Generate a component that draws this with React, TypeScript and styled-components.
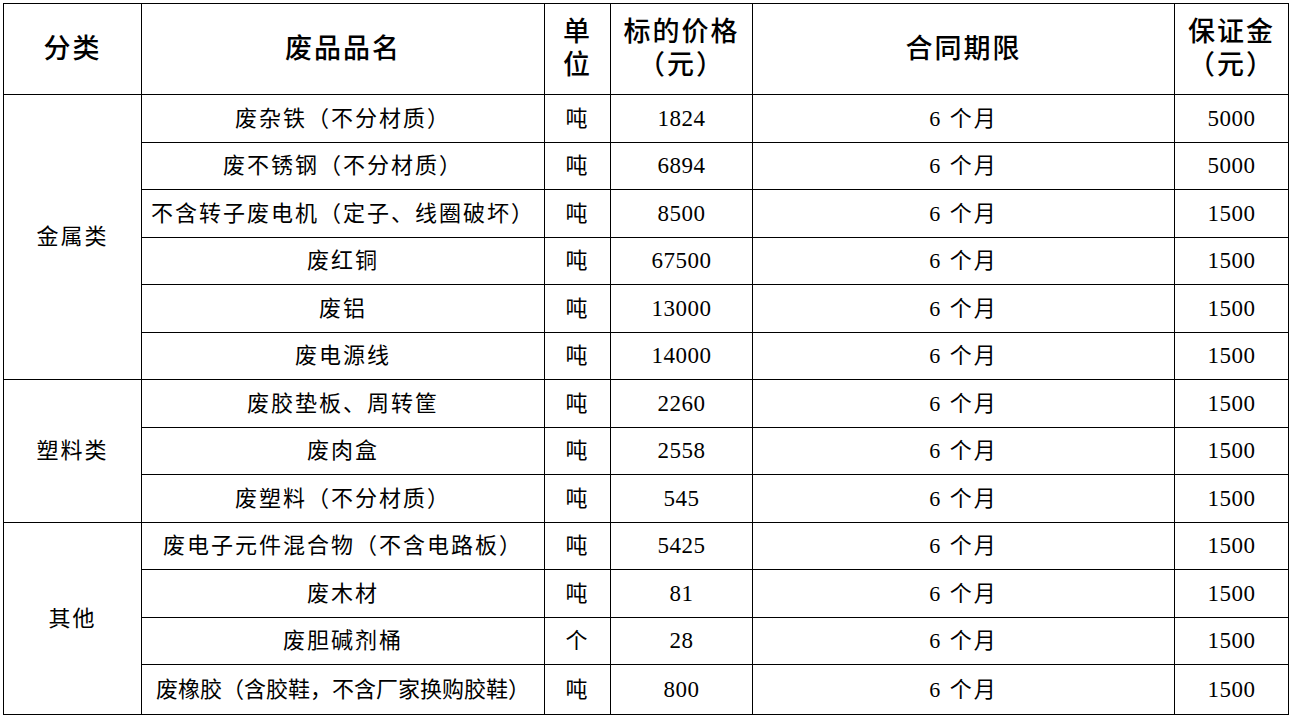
import {FC} from "react";
import styled, {createGlobalStyle} from "styled-components";

interface IRow {
    name: string;
    unit: string;
    price: string;
    term: string;
    deposit: string;
    height: number;
    tight?: boolean;
}

interface IGroup {
    title: string;
    rows: IRow[];
}

const GROUPS: IGroup[] = [
    {
        title: "金属类",
        rows: [
            {name: "废杂铁（不分材质）", unit: "吨", price: "1824", term: "6 个月", deposit: "5000", height: 48},
            {name: "废不锈钢（不分材质）", unit: "吨", price: "6894", term: "6 个月", deposit: "5000", height: 47},
            {name: "不含转子废电机（定子、线圈破坏）", unit: "吨", price: "8500", term: "6 个月", deposit: "1500", height: 48},
            {name: "废红铜", unit: "吨", price: "67500", term: "6 个月", deposit: "1500", height: 47},
            {name: "废铝", unit: "吨", price: "13000", term: "6 个月", deposit: "1500", height: 48},
            {name: "废电源线", unit: "吨", price: "14000", term: "6 个月", deposit: "1500", height: 47},
        ],
    },
    {
        title: "塑料类",
        rows: [
            {name: "废胶垫板、周转筐", unit: "吨", price: "2260", term: "6 个月", deposit: "1500", height: 48},
            {name: "废肉盒", unit: "吨", price: "2558", term: "6 个月", deposit: "1500", height: 47},
            {name: "废塑料（不分材质）", unit: "吨", price: "545", term: "6 个月", deposit: "1500", height: 48},
        ],
    },
    {
        title: "其他",
        rows: [
            {name: "废电子元件混合物（不含电路板）", unit: "吨", price: "5425", term: "6 个月", deposit: "1500", height: 47},
            {name: "废木材", unit: "吨", price: "81", term: "6 个月", deposit: "1500", height: 48},
            {name: "废胆碱剂桶", unit: "个", price: "28", term: "6 个月", deposit: "1500", height: 47},
            {name: "废橡胶（含胶鞋，不含厂家换购胶鞋）", unit: "吨", price: "800", term: "6 个月", deposit: "1500", height: 50, tight: true},
        ],
    },
];

const COLS = [138, 403, 66, 142, 422, 114];

const App: FC = () => {
    return (
        <Page>
            <GlobalStyle/>
            <Table>
                <colgroup>
                    {COLS.map((w, i) => <col key={i} style={{width: w}}/>)}
                </colgroup>
                <thead>
                <Row h={91}>
                    <HeadCell>分类</HeadCell>
                    <HeadCell>废品品名</HeadCell>
                    <HeadCell>单<br/>位</HeadCell>
                    <HeadCell>标的价格<br/>（元）</HeadCell>
                    <HeadCell>合同期限</HeadCell>
                    <HeadCell>保证金<br/>（元）</HeadCell>
                </Row>
                </thead>
                <tbody>
                {GROUPS.map(group => group.rows.map((row, i) => (
                    <Row key={group.title + i} h={row.height}>
                        {i === 0 && <Cell rowSpan={group.rows.length}>{group.title}</Cell>}
                        <Cell tight={row.tight}>{row.name}</Cell>
                        <Cell>{row.unit}</Cell>
                        <NumCell>{row.price}</NumCell>
                        <Cell>{row.term}</Cell>
                        <NumCell>{row.deposit}</NumCell>
                    </Row>
                )))}
                </tbody>
            </Table>
        </Page>
    )
}

export default App

const GlobalStyle = createGlobalStyle`
  body {
    margin: 0;
    background: #fff;
  }
`

const Page = styled.div`
  padding: 3px 0 0 3px;
  width: 1292px;
  height: 718px;
  box-sizing: border-box;
  overflow: hidden;
  font-family: "Liberation Serif", "Noto Sans CJK SC", serif;
  color: #000;
`

const Table = styled.table`
  border-collapse: collapse;
  table-layout: fixed;
  width: 1286px;
`

const Row = styled.tr<{ h: number }>`
  height: ${({h}) => h}px;
`

const Cell = styled.td<{ tight?: boolean }>`
  border: 1px solid #000;
  padding: 0;
  text-align: center;
  vertical-align: middle;
  font-size: 22px;
  letter-spacing: ${({tight}) => tight ? '0' : '2px'};
  line-height: 24px;
  white-space: nowrap;
`

const NumCell = styled(Cell)`
  font-size: 23px;
  letter-spacing: 0.5px;
`

const HeadCell = styled.th`
  border: 1px solid #000;
  padding: 0;
  text-align: center;
  vertical-align: middle;
  font-size: 27px;
  font-weight: 500;
  letter-spacing: 2px;
  line-height: 33px;
  white-space: nowrap;
`
